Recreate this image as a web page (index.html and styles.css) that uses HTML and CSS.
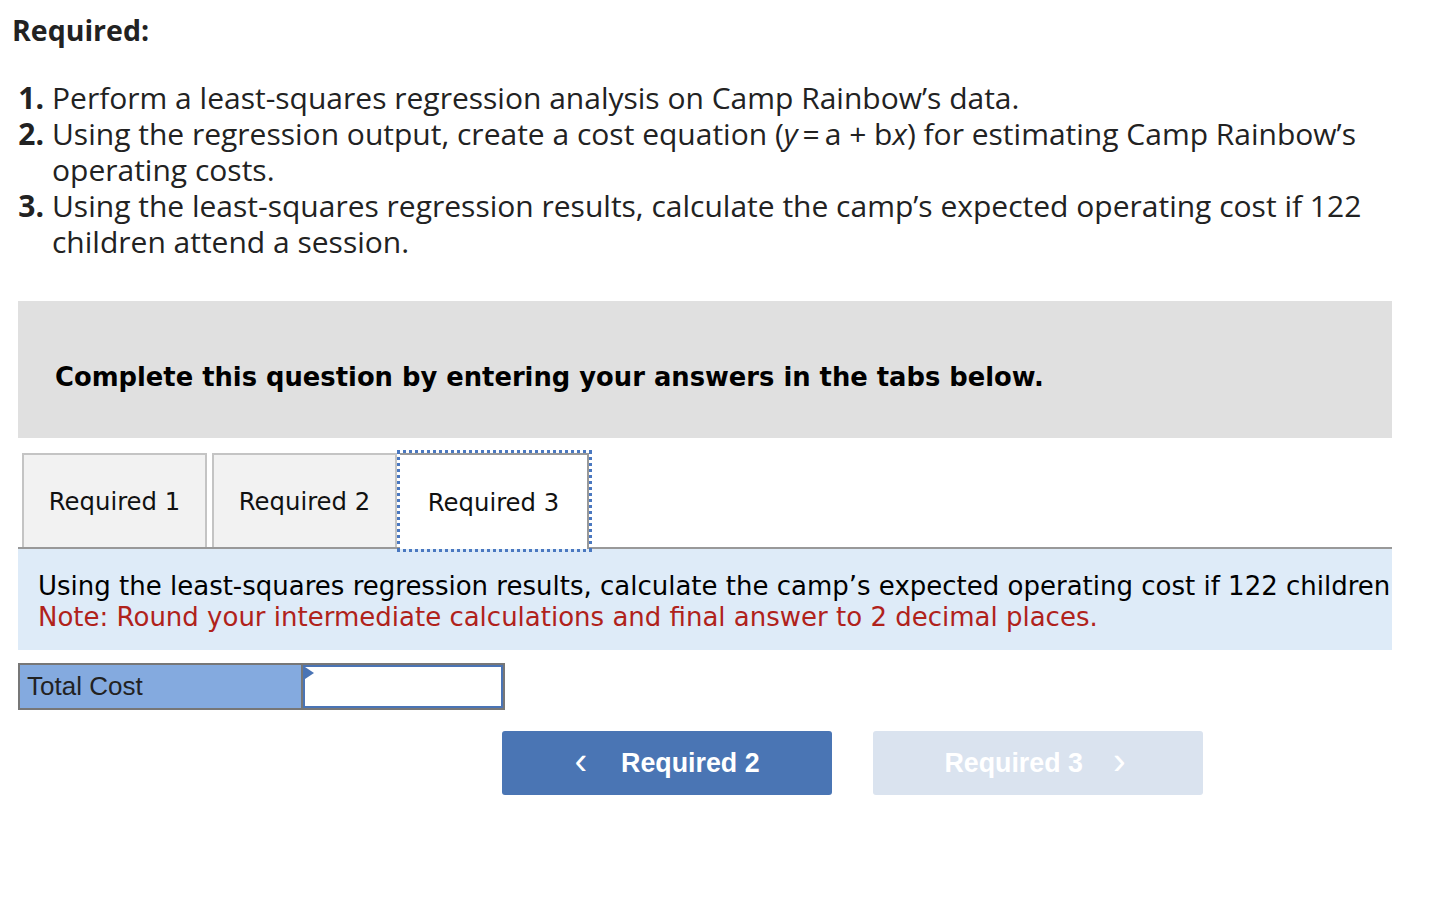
FILE: index.html
```html
<!DOCTYPE html>
<html>
<head>
<meta charset="utf-8">
<link rel="stylesheet" href="styles.css">
</head>
<body>
<div class="page">
  <h2 class="req-title">Required:</h2>
  <ol class="req-list">
    <li><span class="num n1">1.</span><span class="txt">Perform a least-squares regression analysis on Camp Rainbow’s data.</span></li>
    <li><span class="num">2.</span><span class="txt">Using the regression output, create a cost equation (<i>y</i>&#8201;=&#8201;a + b<i>x</i>) for estimating Camp Rainbow’s operating costs.</span></li>
    <li><span class="num">3.</span><span class="txt">Using the least-squares regression results, calculate the camp’s expected operating cost if 122 children attend a session.</span></li>
  </ol>

  <div class="quiz">
    <div class="banner">Complete this question by entering your answers in the tabs below.</div>
    <div class="tabs">
      <div class="tab">Required 1</div>
      <div class="tab">Required 2</div>
      <div class="tab active">Required 3</div>
    </div>
    <div class="prompt">
      <div class="prompt-line">Using the least-squares regression results, calculate the camp’s expected operating cost if 122 children attend a session.</div>
      <div class="note">Note: Round your intermediate calculations and final answer to 2 decimal places.</div>
    </div>
    <div class="answer">
      <div class="label-cell">Total Cost</div>
      <div class="input-cell"><span class="marker"></span><input class="input" type="text"></div>
    </div>
    <div class="nav">
      <button class="btn prev"><span class="chev">&#8249;</span>Required 2</button>
      <button class="btn next disabled">Required 3<span class="chev">&#8250;</span></button>
    </div>
  </div>
</div>
</body>
</html>
```

FILE: styles.css
```css
html, body {
  margin: 0;
  padding: 0;
  background: #ffffff;
}

.req-title {
  margin: 0;
  padding: 13px 0 0 12px;
  font-family: "Open Sans", "Lato", sans-serif;
  font-weight: 700;
  font-size: 28.5px;
  line-height: 34px;
  color: #222222;
}

.req-list {
  list-style: none;
  margin: 0;
  padding: 33px 0 0 0;
  font-family: "Open Sans", "Lato", sans-serif;
  font-size: 30px;
  line-height: 36px;
  color: #222222;
}

.req-list li {
  display: flex;
  align-items: flex-start;
}

.num {
  width: 44px;
  flex: none;
  text-align: right;
  font-weight: 700;
  margin-right: 8px;
}

.txt {
  width: 1345px;
}

.quiz {
  margin: 41px 0 0 18px;
  width: 1374px;
}

.banner {
  background: #e0e0e0;
  height: 137px;
  box-sizing: border-box;
  display: flex;
  align-items: center;
  padding: 14px 0 0 37px;
  font-family: "DejaVu Sans", Verdana, sans-serif;
  font-weight: 700;
  font-size: 25.8px;
  color: #000000;
}

.tabs {
  display: flex;
  margin-top: 15px;
  padding-left: 4px;
  gap: 5px;
  border-bottom: 2px solid #999999;
  height: 94px;
  align-items: flex-end;
}

.tab {
  box-sizing: border-box;
  width: 185px;
  height: 94px;
  display: flex;
  align-items: center;
  justify-content: center;
  background: #f2f2f2;
  border: 2px solid #c4c4c4;
  border-bottom: none;
  font-family: "DejaVu Sans", Verdana, sans-serif;
  font-size: 24.3px;
  color: #111111;
}

.tab.active {
  margin-left: -2px;
  width: 189px;
  background: #ffffff;
  border: 2px solid #999999;
  border-bottom: none;
  border-left: none;
  outline: 3px dotted #4a78c0;
  outline-offset: 0;
  height: 96px;
  margin-bottom: -2px;
}

.prompt {
  background: #deebf8;
  height: 101px;
  padding: 22px 0 0 20px;
  box-sizing: border-box;
  overflow: hidden;
  white-space: nowrap;
  font-family: "DejaVu Sans", Verdana, sans-serif;
  font-size: 26px;
  line-height: 31px;
  color: #000000;
}

.note {
  color: #b0221b;
}

.answer {
  display: flex;
  margin-top: 13px;
  width: 487px;
  height: 47px;
  box-sizing: border-box;
  border: 2px solid #777777;
}

.label-cell {
  width: 283px;
  flex: none;
  background: #84aadf;
  border-right: 2px solid #777777;
  display: flex;
  align-items: center;
  padding-left: 7px;
  box-sizing: border-box;
  font-family: "Liberation Sans", Arial, sans-serif;
  font-size: 26px;
  color: #222222;
}

.input-cell {
  flex: 1;
  position: relative;
  display: flex;
}

.input {
  flex: 1;
  margin: 0;
  border: 2px solid #4a74b5;
  background: #ffffff;
  outline: none;
  box-sizing: border-box;
  width: 100%;
  height: 100%;
}

.marker {
  position: absolute;
  left: 2px;
  top: 2px;
  width: 0;
  height: 0;
  border-top: 6px solid transparent;
  border-bottom: 6px solid transparent;
  border-left: 9px solid #4a74b5;
}

.nav {
  display: flex;
  gap: 41px;
  margin: 21px 0 0 484px;
}

.btn {
  width: 330px;
  height: 64px;
  border: none;
  border-radius: 3px;
  display: flex;
  align-items: center;
  justify-content: center;
  font-family: "Liberation Sans", Arial, sans-serif;
  font-weight: 700;
  font-size: 26.8px;
  color: #ffffff;
  padding: 0;
}

.btn.prev {
  background: #4a75b4;
}

.btn.disabled {
  background: #dae3ef;
}

.chev {
  font-weight: 400;
  font-size: 38px;
  line-height: 1;
  margin-top: -4px;
}

.prev .chev {
  margin-right: 34px;
}

.next .chev {
  margin-left: 30px;
}

.next {
  padding-right: 6px;
}
```
